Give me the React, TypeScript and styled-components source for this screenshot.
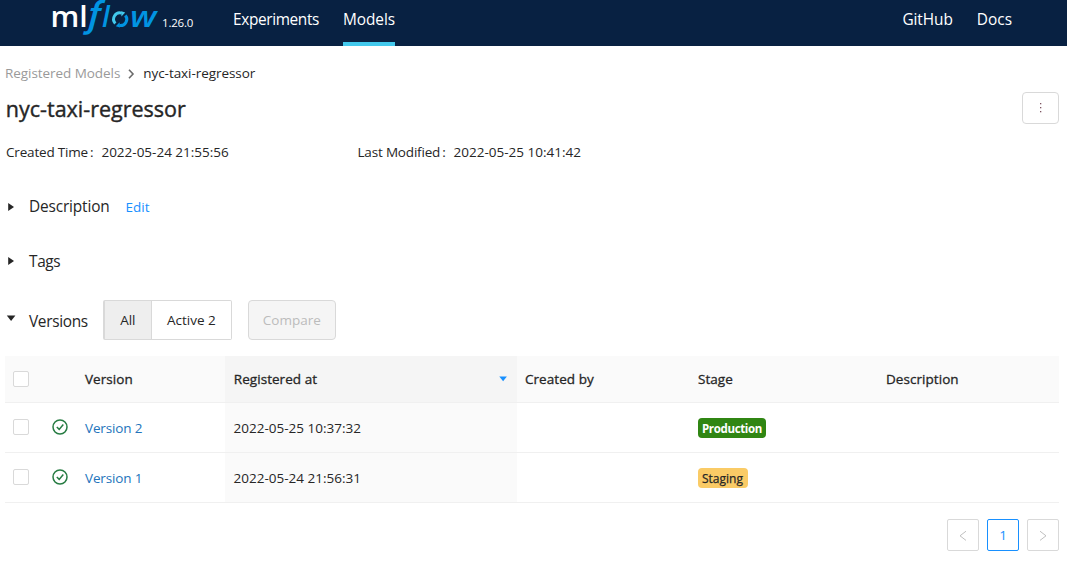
import React from "react";
import styled, { createGlobalStyle, css } from "styled-components";

const Global = createGlobalStyle`
  *, *::before, *::after { box-sizing: border-box; }
  body {
    margin: 0;
    background: #fff;
    color: #262626;
    font-family: "Open Sans", "Segoe UI", sans-serif;
    font-size: 13.5px;
    line-height: 20px;
  }
  button { font: inherit; color: inherit; margin: 0; padding: 0; }
  a { text-decoration: none; color: inherit; }
`;

const TopBar = styled.header`
  display: flex;
  height: 46px;
  padding: 0 55px 0 50px;
  background: #082142;
  color: #fff;
`;

const Brand = styled.div`
  display: flex;
  width: 183px;
`;

const Release = styled.span`
  margin: 13px 0 0 2px;
  font-size: 11.5px;
  letter-spacing: -0.2px;
`;

const Nav = styled.nav`
  display: flex;
  flex: 1;
  gap: 24px;
`;

const NavLink = styled.a<{ $active?: boolean; $tracking?: number }>`
  height: 46px;
  padding-top: 10px;
  font-size: 15.4px;
  letter-spacing: ${(p) => p.$tracking ?? 0}px;
  border-bottom: 4px solid ${(p) => (p.$active ? "#43c9ed" : "transparent")};
`;

const Spacer = styled.div`
  flex: 1;
`;

const Page = styled.main`
  display: flex;
  flex-direction: column;
  padding: 17px 8px 0 5px;
`;

const Breadcrumb = styled.div`
  display: flex;
  align-items: center;
  height: 20px;
  letter-spacing: -0.06px;
  svg { margin: 1px 8px 0 7px; }
`;

const Crumb = styled.a`
  color: #9a9a9a;
`;

const TitleRow = styled.div`
  display: flex;
  align-items: center;
  justify-content: space-between;
  height: 32px;
  margin-top: 9px;
`;

const Title = styled.h1`
  margin: 2px 0 0;
  padding-left: 0.8px;
  font-size: 21.5px;
  font-weight: 400;
  line-height: 32px;
  -webkit-text-stroke: 0.4px currentColor;
`;

const MenuButton = styled.button`
  display: flex;
  align-items: center;
  justify-content: center;
  width: 37px;
  height: 32px;
  background: #fff;
  border: 1px solid #d9d9d9;
  border-radius: 4px;
`;

const Facts = styled.dl`
  display: grid;
  grid-template-columns: 351.5px 1fr;
  margin: 18px 0 0;
  padding-left: 1px;
`;

const Fact = styled.div`
  display: flex;
  dt { letter-spacing: -0.18px; }
  dt::after { content: ":"; margin: 0 8px 0 2px; }
  dd { margin: 0; }
`;

const Section = styled.section<{ $top: number }>`
  display: flex;
  align-items: center;
  margin-top: ${(p) => p.$top}px;
  padding-left: 1px;
`;

const Caret = styled.span`
  display: flex;
  width: 23px;
`;

const SectionTitle = styled.h2<{ $tracking: number; $drop?: number }>`
  margin: 0;
  padding-top: ${(p) => p.$drop ?? 0}px;
  font-size: 15.4px;
  font-weight: 400;
  line-height: 24px;
  letter-spacing: ${(p) => p.$tracking}px;
`;

const EditLink = styled.a`
  margin-left: 16px;
  color: #1890ff;
`;

const Segments = styled.div`
  display: flex;
  height: 40px;
  margin-left: 15px;
`;

const Segment = styled.button<{ $on?: boolean }>`
  border: 1px solid #d9d9d9;
  ${(p) =>
    p.$on
      ? css`
          width: 49px;
          background: #eee;
          border-left-width: 2px;
          border-radius: 2px 0 0 2px;
        `
      : css`
          width: 80px;
          background: #fff;
          border-left: 0;
          border-radius: 0 2px 2px 0;
        `}
`;

const CompareButton = styled.button`
  width: 88px;
  height: 40px;
  margin-left: 16px;
  color: #bcbcbc;
  background: #f5f5f5;
  border: 1px solid #d9d9d9;
  border-radius: 4px;
`;

const Table = styled.table`
  width: 1054px;
  margin-top: 16px;
  table-layout: fixed;
  border-collapse: separate;
  border-spacing: 0;
`;

const HeadCell = styled.th<{ $sorted?: boolean }>`
  height: 47px;
  padding: 0 9px 0 8px;
  text-align: left;
  font-weight: 400;
  letter-spacing: 0.05px;
  -webkit-text-stroke: 0.3px currentColor;
  background: ${(p) => (p.$sorted ? "#f5f5f5" : "#fafafa")};
  border-bottom: 1px solid #f0f0f0;
`;

const SortLabel = styled.div`
  display: flex;
  align-items: center;
  justify-content: space-between;
  padding-left: 0.8px;
`;

const Cell = styled.td<{ $sorted?: boolean }>`
  height: 50px;
  padding: ${(p) => (p.$sorted ? "0 8px 0 8.6px" : "0 8px")};
  background: ${(p) => (p.$sorted ? "#fafafa" : "#fff")};
  border-bottom: 1px solid #f0f0f0;
`;

const Checkbox = styled.span`
  display: block;
  width: 16px;
  height: 16px;
  margin-top: -1px;
  background: #fff;
  border: 1px solid #d9d9d9;
  border-radius: 2px;
`;

const StatusIcon = styled.svg`
  display: block;
  margin: -2px 0 0 -1px;
`;

const VersionLink = styled.a`
  color: #2374bb;
  letter-spacing: -0.15px;
`;

const StageTag = styled.span<{ $kind: "Production" | "Staging" }>`
  display: block;
  height: 20px;
  padding: 0 4px;
  line-height: 21px;
  border-radius: 4px;
  ${(p) =>
    p.$kind === "Production"
      ? css`
          width: 68px;
          color: #fff;
          background: #308613;
          font-size: 11.5px;
          font-weight: 700;
          letter-spacing: -0.35px;
        `
      : css`
          width: 50px;
          color: #262626;
          background: #facb66;
          font-size: 12px;
          -webkit-text-stroke: 0.25px currentColor;
        `}
`;

const Pager = styled.div`
  display: flex;
  justify-content: flex-end;
  gap: 8px;
  margin-top: 16px;
`;

const PageButton = styled.button<{ $current?: boolean }>`
  display: flex;
  align-items: center;
  justify-content: center;
  width: 32px;
  height: 32px;
  background: #fff;
  color: ${(p) => (p.$current ? "#1890ff" : "#bfbfbf")};
  border: 1px solid ${(p) => (p.$current ? "#1890ff" : "#d9d9d9")};
  border-radius: 2px;
`;

const Logo = () => (
  <svg width="110" height="40" viewBox="50 0 110 40">
    <g fontFamily="Open Sans" fontWeight="600">
      <text transform="translate(50.4 27) scale(1 1.06)" fontSize="28" fill="#fff" textLength="37.2" lengthAdjust="spacingAndGlyphs">ml</text>
      <g fill="#0194e2" fontStyle="italic">
        <text transform="translate(87.2 27.3) skewX(-6) scale(1.25 1.2)" fontSize="30" fontFamily="Roboto" fontWeight="500">ƒ</text>
        <text transform="translate(102 27) scale(1 1.06)" fontSize="28">l</text>
        <text x="130" y="27" fontSize="28" textLength="26.5" lengthAdjust="spacingAndGlyphs">w</text>
      </g>
    </g>
    <g fill="none" strokeWidth="3">
      <path d="M115.3 23.4 A6.3 6.3 0 0 1 121.8 13.1" stroke="#43c9ed" />
      <path d="M125.4 15.4 A6.3 6.3 0 0 1 119.6 25.5" stroke="#0194e2" />
    </g>
    <path d="M121.4 11.2 L125.2 12.6 L121.4 16.4 Z" fill="#43c9ed" />
    <path d="M120 27.6 L115.8 26.2 L119.6 22.2 Z" fill="#0194e2" />
  </svg>
);

const CaretRight = () => (
  <svg width="9" height="8" viewBox="0 0 9 8">
    <path d="M2.2 0 L8 4 L2.2 8 Z" fill="#262626" />
  </svg>
);

const CaretDown = () => (
  <svg width="10" height="10" viewBox="0 0 10 10">
    <path d="M0.8 0.5 H9.4 L5.1 5.9 Z" fill="#262626" />
  </svg>
);

const Chevron = ({ flip }: { flip?: boolean }) => (
  <svg width="8" height="12" viewBox="0 0 8 12" fill="none" stroke="currentColor">
    <path d={flip ? "M1 2.2 L7 6.8 L1 11.4" : "M7 2.2 L1 6.8 L7 11.4"} />
  </svg>
);

const Ready = () => (
  <StatusIcon width="16" height="16" viewBox="0 0 16 16" fill="none" stroke="#277c43">
    <circle cx="8" cy="8" r="7" strokeWidth="1.5" />
    <path d="M4.8 8 L7.2 10.4 L11.3 5.6" strokeWidth="1.5" />
  </StatusIcon>
);

type Row = { name: string; registered: string; stage: "Production" | "Staging" };

const rows: Row[] = [
  { name: "Version 2", registered: "2022-05-25 10:37:32", stage: "Production" },
  { name: "Version 1", registered: "2022-05-24 21:56:31", stage: "Staging" },
];

export default function App() {
  return (
    <>
      <Global />
      <TopBar>
        <Brand>
          <Logo />
          <Release>1.26.0</Release>
        </Brand>
        <Nav>
          <NavLink $tracking={-0.36}>Experiments</NavLink>
          <NavLink $active $tracking={-0.08}>Models</NavLink>
          <Spacer />
          <NavLink $tracking={-0.05}>GitHub</NavLink>
          <NavLink>Docs</NavLink>
        </Nav>
      </TopBar>
      <Page>
        <Breadcrumb>
          <Crumb>Registered Models</Crumb>
          <svg width="8" height="10" viewBox="0 0 8 10" fill="none" stroke="#6b6b6b" strokeWidth="1.6">
            <path d="M2 0.8 L6 5 L2 9.2" />
          </svg>
          <span>nyc-taxi-regressor</span>
        </Breadcrumb>
        <TitleRow>
          <Title>nyc-taxi-regressor</Title>
          <MenuButton aria-label="More actions">
            <svg width="3" height="12" viewBox="0 0 3 12" fill="#7d5560">
              <rect x="1" y="1" width="1.3" height="1.3" />
              <rect x="1" y="5" width="1.3" height="1.3" />
              <rect x="1" y="9" width="1.3" height="1.3" />
            </svg>
          </MenuButton>
        </TitleRow>
        <Facts>
          <Fact>
            <dt>Created Time</dt>
            <dd>2022-05-24 21:55:56</dd>
          </Fact>
          <Fact>
            <dt>Last Modified</dt>
            <dd>2022-05-25 10:41:42</dd>
          </Fact>
        </Facts>
        <Section $top={33}>
          <Caret><CaretRight /></Caret>
          <SectionTitle $tracking={-0.15}>Description</SectionTitle>
          <EditLink>Edit</EditLink>
        </Section>
        <Section $top={29}>
          <Caret><CaretRight /></Caret>
          <SectionTitle $tracking={-0.35} $drop={2}>Tags</SectionTitle>
        </Section>
        <Section $top={26}>
          <Caret><CaretDown /></Caret>
          <SectionTitle $tracking={-0.32} $drop={3}>Versions</SectionTitle>
          <Segments>
            <Segment $on>All</Segment>
            <Segment>Active 2</Segment>
          </Segments>
          <CompareButton disabled>Compare</CompareButton>
        </Section>
        <Table>
          <colgroup>
            <col width="40" />
            <col width="32" />
            <col width="148" />
            <col width="292" />
            <col width="173" />
            <col width="188" />
            <col width="181" />
          </colgroup>
          <thead>
            <tr>
              <HeadCell><Checkbox /></HeadCell>
              <HeadCell />
              <HeadCell>Version</HeadCell>
              <HeadCell $sorted>
                <SortLabel>
                  Registered at
                  <svg width="9" height="6" viewBox="0 0 9 6">
                    <path d="M0.3 0.5 H7.9 L4.1 5.3 Z" fill="#1890ff" />
                  </svg>
                </SortLabel>
              </HeadCell>
              <HeadCell>Created by</HeadCell>
              <HeadCell>Stage</HeadCell>
              <HeadCell>Description</HeadCell>
            </tr>
          </thead>
          <tbody>
            {rows.map((row) => (
              <tr key={row.name}>
                <Cell><Checkbox /></Cell>
                <Cell><Ready /></Cell>
                <Cell><VersionLink>{row.name}</VersionLink></Cell>
                <Cell $sorted>{row.registered}</Cell>
                <Cell />
                <Cell><StageTag $kind={row.stage}>{row.stage}</StageTag></Cell>
                <Cell />
              </tr>
            ))}
          </tbody>
        </Table>
        <Pager>
          <PageButton aria-label="Previous page"><Chevron /></PageButton>
          <PageButton $current>1</PageButton>
          <PageButton aria-label="Next page"><Chevron flip /></PageButton>
        </Pager>
      </Page>
    </>
  );
}
